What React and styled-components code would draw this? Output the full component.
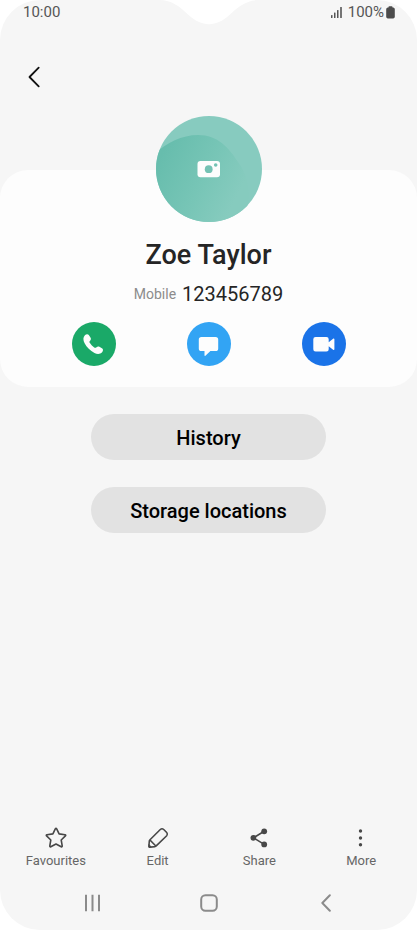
import React from "react";
import styled, { createGlobalStyle } from "styled-components";

const GlobalStyle = createGlobalStyle`
  * { box-sizing: border-box; }
  body { margin: 0; background: #fff; font-family: Roboto, "Noto Sans", sans-serif; }
  button { font: inherit; color: inherit; border: 0; padding: 0; background: none; cursor: pointer; }
  svg { display: block; }
`;

const Screen = styled.div`
  position: relative;
  display: flex;
  flex-direction: column;
  min-height: 100vh;
  background: #f6f6f6;
  border-radius: 40px;
  overflow: hidden;
`;

const Notch = styled.svg`
  position: absolute;
  top: 0;
  left: 50%;
  transform: translateX(-50%);
`;

const StatusBar = styled.header`
  display: flex;
  justify-content: space-between;
  align-items: center;
  height: 24px;
  padding: 0 22px 0 23px;
  font-size: 15px;
  line-height: 24px;
  color: #555;
`;

const StatusGroup = styled.div`
  display: flex;
  align-items: center;
  gap: ${(p) => p.$gap}px;
`;

const TopBar = styled.div`
  display: flex;
  align-items: center;
  height: 106px;
  padding: 0 18px;
`;

const BackButton = styled.button`
  display: grid;
  place-items: center;
  width: 32px;
  height: 40px;
`;

const ContactCard = styled.section`
  display: flex;
  flex-direction: column;
  align-items: center;
  margin-top: 40px;
  padding-bottom: 21px;
  background: #fdfdfd;
  border-radius: 28px;
`;

const AvatarButton = styled.button`
  width: 106px;
  height: 106px;
  margin-top: -54px;
  border-radius: 50%;
  overflow: hidden;
`;

const Name = styled.h1`
  margin: 17px 0 0;
  font-size: 27px;
  line-height: 32px;
  font-weight: 500;
  color: #252525;
`;

const Phone = styled.p`
  display: flex;
  align-items: center;
  gap: 6px;
  margin: 11px 0 0;
  font-size: 20px;
  line-height: 24px;
  color: #252525;
`;

const PhoneKind = styled.span`
  font-size: 14px;
  color: #8c8c8c;
`;

const ContactActions = styled.div`
  display: grid;
  grid-template-columns: repeat(3, 1fr);
  justify-items: center;
  align-self: stretch;
  margin-top: 16px;
  padding: 0 36px;
`;

const RoundButton = styled.button`
  width: 44px;
  height: 44px;
  border-radius: 50%;
  background: ${(p) => p.$color};
`;

const PillList = styled.div`
  display: flex;
  flex-direction: column;
  align-items: center;
  gap: 27px;
  margin: 27px 0;
`;

const PillButton = styled.button`
  && {
    width: 56.4%;
    height: 46px;
    padding-top: 1px;
    border-radius: 23px;
    background: #e2e2e2;
    font-size: 20px;
    line-height: 24px;
    font-weight: 500;
    color: #000;
  }
`;

const Toolbar = styled.nav`
  display: grid;
  grid-template-columns: repeat(4, 1fr);
  margin-top: auto;
  padding: 0 5px;
`;

const ToolButton = styled.button`
  && {
    display: flex;
    flex-direction: column;
    align-items: center;
    gap: 3px;
    font-size: 13px;
    line-height: 16px;
    color: #666;
  }
`;

const SystemNav = styled.nav`
  display: grid;
  grid-template-columns: repeat(3, 1fr);
  align-items: center;
  height: 40px;
  margin: 14px 0 7px;
  padding: 0 33px 0 35px;
`;

const NavButton = styled.button`
  display: grid;
  place-items: center;
  height: 40px;
`;

const SignalIcon = () => (
  <svg width="12" height="12" viewBox="0 0 12 12" fill="#555" aria-hidden="true">
    <rect x="0" y="9" width="1.5" height="3" rx=".5" />
    <rect x="3" y="6.5" width="1.5" height="5.5" rx=".5" />
    <rect x="6" y="4" width="1.5" height="8" rx=".5" />
    <rect x="9.2" y="1" width="1.6" height="11" rx=".5" />
  </svg>
);

const BatteryIcon = () => (
  <svg width="9" height="13" viewBox="0 0 9 13" fill="#4c4c4c" aria-hidden="true">
    <path d="M2.5 1.5V1a.8.8 0 0 1 .8-.8h2.4a.8.8 0 0 1 .8.8v.5h.7A1.7 1.7 0 0 1 8.8 3.2v7.6a1.7 1.7 0 0 1-1.7 1.7H1.9A1.7 1.7 0 0 1 .2 10.8V3.2a1.7 1.7 0 0 1 1.7-1.7Z" />
  </svg>
);

const ChevronIcon = ({ width, height, color, stroke }) => (
  <svg width={width} height={height} viewBox="0 0 12 22" fill="none" stroke={color} strokeWidth={stroke} strokeLinecap="round" strokeLinejoin="round" aria-hidden="true">
    <path d="M10.7 1.6 1.5 11l9.2 9.4" />
  </svg>
);

const AvatarArt = () => (
  <svg width="106" height="106" viewBox="0 0 106 106" aria-hidden="true">
    <defs>
      <linearGradient id="wave" x1="0" y1=".35" x2=".85" y2=".75">
        <stop offset="0" stopColor="#67bdad" />
        <stop offset=".55" stopColor="#77c5b6" />
        <stop offset="1" stopColor="#86cbbe" />
      </linearGradient>
    </defs>
    <rect width="106" height="106" fill="#87cbbf" />
    <path d="M0 37C10 27 26 19 42 19C62 19 73 32 82 46C93 61 96 78 89 106H0Z" fill="url(#wave)" />
    <rect x="41.5" y="45" width="22.5" height="16.3" rx="3" fill="#fdfdfd" />
    <circle cx="52.7" cy="53.2" r="3.9" fill="#74c2b4" />
    <circle cx="59.7" cy="49" r="1.8" fill="#74c2b4" />
  </svg>
);

const CallIcon = () => (
  <svg width="44" height="44" viewBox="0 0 44 44" aria-hidden="true">
    <path d="M12.9 13.3c1-1 2.9-1.4 3.9-.3l1.8 2.8c.6 1.1.3 2.1-.5 2.9-.8.8-.9 1.3-.2 2.3 1.2 1.8 2.6 3.2 4.3 4.4 1 .7 1.5.6 2.3-.2.8-.8 1.9-1.1 2.9-.5l2.9 1.9c1.1.9.8 2.7-.2 3.7-1.9 2.1-4.9 2.2-7.6.7-4.3-2.3-7.7-5.8-9.9-9.8-1.6-2.8-1.7-6 .3-7.9Z" fill="#fdfdfd" />
  </svg>
);

const MessageIcon = () => (
  <svg width="44" height="44" viewBox="0 0 44 44" aria-hidden="true">
    <path d="M14.4 15h14.2a2.6 2.6 0 0 1 2.6 2.6v8.8a2.6 2.6 0 0 1-2.6 2.6h-5.2l-5 4.7c-.5.4-.9.2-.9-.4V29h-3.1a2.6 2.6 0 0 1-2.6-2.6v-8.8a2.6 2.6 0 0 1 2.6-2.6Z" fill="#fdfdfd" />
  </svg>
);

const VideoIcon = () => (
  <svg width="44" height="44" viewBox="0 0 44 44" aria-hidden="true">
    <path d="M13.6 15h10.8a2.3 2.3 0 0 1 2.3 2.3v2.9l4.4-3.5c.6-.5 1.3-.2 1.3.5v10c0 .7-.7 1-1.3.5l-4.4-3.5v3a2.3 2.3 0 0 1-2.3 2.3H13.6a2.3 2.3 0 0 1-2.3-2.3v-9.9a2.3 2.3 0 0 1 2.3-2.3Z" fill="#fdfdfd" />
  </svg>
);

const StarIcon = () => (
  <svg width="24" height="24" viewBox="0 0 24 24" fill="none" stroke="#484848" strokeWidth="1.6" strokeLinejoin="round" aria-hidden="true">
    <path d="M11.3 2.8q.7-1.2 1.4 0l2.4 5.1 5.9.8q1.2.3.4 1.2L17.2 14l1 5.9q.1 1.3-1 .8L12 18l-5.2 2.7q-1.1.5-1-.8l1-5.9-4.2-4.1q-.8-.9.4-1.2l5.9-.8Z" />
  </svg>
);

const PencilIcon = () => (
  <svg width="24" height="24" viewBox="0 0 24 24" fill="none" stroke="#484848" strokeWidth="1.6" strokeLinejoin="round" strokeLinecap="round" aria-hidden="true">
    <path d="M4 13.8 14.3 3.5q1.7-1.5 3.4 0l3 3q1.4 1.6 0 3.2L10.2 19.9q-.6.6-1.4.7l-4.9.6q-1.1 0-1-1.1l.4-4.9q.1-.8.7-1.4ZM4.2 14.2l5.4 5.6" />
    <path d="M3 18.5 5.5 21H3Z" fill="#484848" strokeWidth=".5" />
  </svg>
);

const ShareIcon = () => (
  <svg width="24" height="24" viewBox="0 0 24 24" fill="#484848" aria-hidden="true">
    <path d="M17.2 5.3 6.5 11.8l10.7 6.6" fill="none" stroke="#484848" strokeWidth="1.6" />
    <circle cx="17.2" cy="5.3" r="2.9" />
    <circle cx="6.4" cy="11.8" r="2.9" />
    <circle cx="17.2" cy="18.4" r="2.9" />
  </svg>
);

const MoreIcon = () => (
  <svg width="24" height="24" viewBox="0 0 24 24" fill="#484848" aria-hidden="true">
    <circle cx="11.5" cy="5" r="1.7" />
    <circle cx="11.5" cy="12" r="1.7" />
    <circle cx="11.5" cy="18.8" r="1.7" />
  </svg>
);

const RecentsIcon = () => (
  <svg width="18" height="18" viewBox="0 0 18 18" stroke="#8b8b8b" strokeWidth="2" aria-hidden="true">
    <path d="M2 .8v16.4M8.5 .8v16.4M15 .8v16.4" />
  </svg>
);

const HomeIcon = () => (
  <svg width="18" height="18" viewBox="0 0 18 18" fill="none" stroke="#8b8b8b" strokeWidth="2" aria-hidden="true">
    <rect x="1.2" y="1.2" width="15.6" height="15.6" rx="4.2" />
  </svg>
);

const contactActions = [
  { label: "Call", color: "#1aa968", Icon: CallIcon },
  { label: "Message", color: "#32a4f4", Icon: MessageIcon },
  { label: "Video call", color: "#1a73e8", Icon: VideoIcon },
];

const tools = [
  { label: "Favourites", Icon: StarIcon },
  { label: "Edit", Icon: PencilIcon },
  { label: "Share", Icon: ShareIcon },
  { label: "More", Icon: MoreIcon },
];

export default function App() {
  return (
    <>
      <GlobalStyle />
      <Screen>
        <Notch width="100" height="25" viewBox="0 0 100 25" fill="#fff" aria-hidden="true">
          <path d="M0 0C13 0 21 7 29 14.5C36 21 43 24.2 50 24.2S64 21 71 14.5C79 7 87 0 100 0Z" />
        </Notch>
        <StatusBar>
          <span>10:00</span>
          <StatusGroup $gap={5}>
            <SignalIcon />
            <StatusGroup $gap={2}>
              <span>100%</span>
              <BatteryIcon />
            </StatusGroup>
          </StatusGroup>
        </StatusBar>
        <TopBar>
          <BackButton aria-label="Back">
            <ChevronIcon width={12} height={22} color="#111" stroke={1.8} />
          </BackButton>
        </TopBar>
        <ContactCard>
          <AvatarButton aria-label="Change photo">
            <AvatarArt />
          </AvatarButton>
          <Name>Zoe Taylor</Name>
          <Phone>
            <PhoneKind>Mobile</PhoneKind>
            <span>123456789</span>
          </Phone>
          <ContactActions>
            {contactActions.map(({ label, color, Icon }) => (
              <RoundButton key={label} $color={color} aria-label={label}>
                <Icon />
              </RoundButton>
            ))}
          </ContactActions>
        </ContactCard>
        <PillList>
          <PillButton>History</PillButton>
          <PillButton>Storage locations</PillButton>
        </PillList>
        <Toolbar>
          {tools.map(({ label, Icon }) => (
            <ToolButton key={label}>
              <Icon />
              {label}
            </ToolButton>
          ))}
        </Toolbar>
        <SystemNav>
          <NavButton aria-label="Recents"><RecentsIcon /></NavButton>
          <NavButton aria-label="Home"><HomeIcon /></NavButton>
          <NavButton aria-label="Back"><ChevronIcon width={10} height={18} color="#8b8b8b" stroke={2.4} /></NavButton>
        </SystemNav>
      </Screen>
    </>
  );
}
